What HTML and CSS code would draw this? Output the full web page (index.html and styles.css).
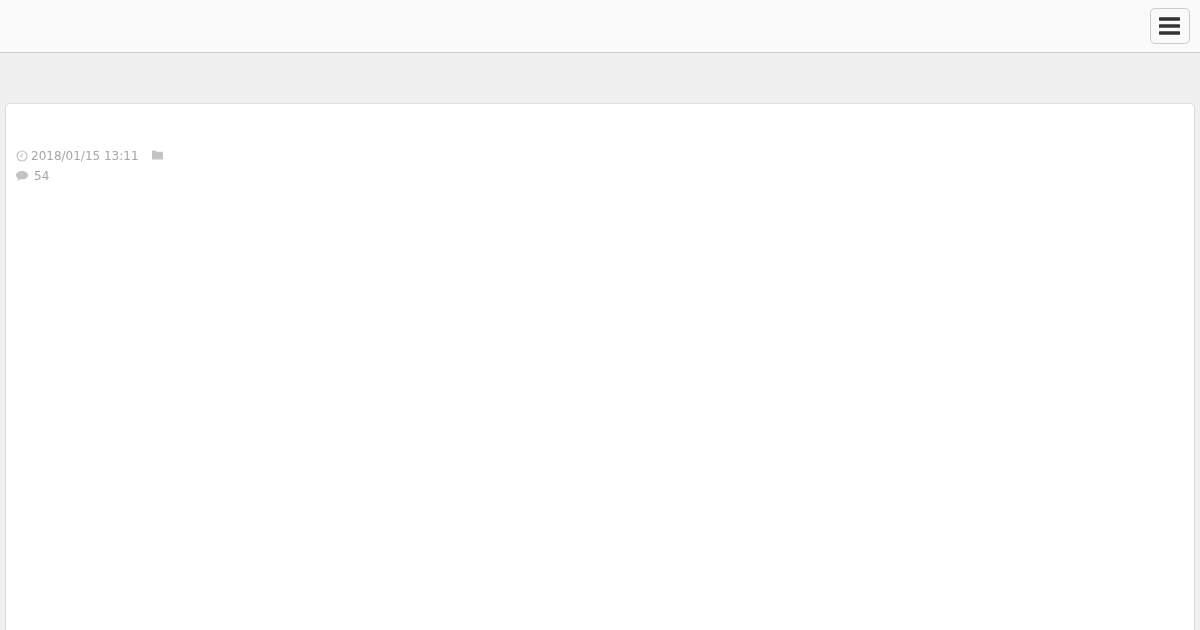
FILE: index.html
```html
<!DOCTYPE html>
<html lang="ja">
<head>
    <meta charset="UTF-8">
    <title>Post</title>
    <link rel="stylesheet" href="styles.css">
</head>
<body>
    <header class="navbar">
        <button class="menu-toggle" type="button" aria-label="Menu">
            <svg width="21" height="18" viewBox="0 0 21 18">
                <rect y="0.3" width="21" height="3.4" rx="0.6" fill="#333"/>
                <rect y="7.3" width="21" height="3.4" rx="0.6" fill="#333"/>
                <rect y="14.3" width="21" height="3.4" rx="0.6" fill="#333"/>
            </svg>
        </button>
    </header>

    <main class="post">
        <div class="post-meta">
            <div class="meta-row">
                <svg class="icon-clock" width="12" height="12" viewBox="0 0 12 12">
                    <circle cx="6" cy="6" r="5" fill="none" stroke="#c4c4c4" stroke-width="1.2"/>
                    <path d="M6 3v3.4H3.6" fill="none" stroke="#c4c4c4" stroke-width="1"/>
                </svg>
                <span class="meta-date">2018/01/15 13:11</span>
                <svg class="icon-folder" width="11" height="10" viewBox="0 0 12 10">
                    <path d="M0 1a1 1 0 0 1 1-1h3l1 1.500h6a1 1 0 0 1 1 1V9a1 1 0 0 1-1 1H1a1 1 0 0 1-1-1z" fill="#c4c4c4"/>
                </svg>
            </div>
            <div class="meta-row">
                <svg class="icon-comment" width="12" height="10" viewBox="0 0 12 10">
                    <path d="M6 0c3.300 0 6 1.800 6 4.200S9.300 8.400 6 8.400c-.5 0-1 0-1.500-.1C3.500 9.200 2.200 9.800.8 10c.7-.7 1.300-1.500 1.400-2.400C.9 6.900 0 5.600 0 4.200 0 1.800 2.700 0 6 0z" fill="#c4c4c4"/>
                </svg>
                <span class="meta-count">54</span>
            </div>
        </div>
    </main>
</body>
</html>
```

FILE: styles.css
```css
html,
body {
    height: 100%;
}

body {
    margin: 0;
    background-color: #f0f0f0;
    font-family: "DejaVu Sans", sans-serif;
    font-size: 12px;
    color: #a6a6a6;
    overflow: hidden;
}

.navbar {
    display: flex;
    justify-content: flex-end;
    align-items: flex-start;
    box-sizing: border-box;
    height: 53px;
    padding: 8px 10px 0;
    background-color: #fafafa;
    border-bottom: 1px solid #ccc;
}

.menu-toggle {
    display: flex;
    justify-content: center;
    align-items: center;
    box-sizing: border-box;
    width: 40px;
    height: 36px;
    padding: 0 1px 0 0;
    background-color: #fafafa;
    border: 1px solid #ccc;
    border-radius: 5px;
}

.post {
    box-sizing: border-box;
    height: 600px;
    margin: 50px 5px 0;
    padding: 42px 10px 0;
    background-color: #fff;
    border: 1px solid #ddd;
    border-radius: 5px;
}

/* Capa propia: el texto sale en gris sin subpixel, como en la captura */
.post-meta {
    will-change: transform;
}

.meta-row {
    display: flex;
    align-items: center;
    height: 20px;
}

.icon-clock {
    margin-right: 3px;
}

.icon-folder {
    margin: -2px 0 0 13px;
}

.meta-count {
    margin-left: 6px;
}
```
